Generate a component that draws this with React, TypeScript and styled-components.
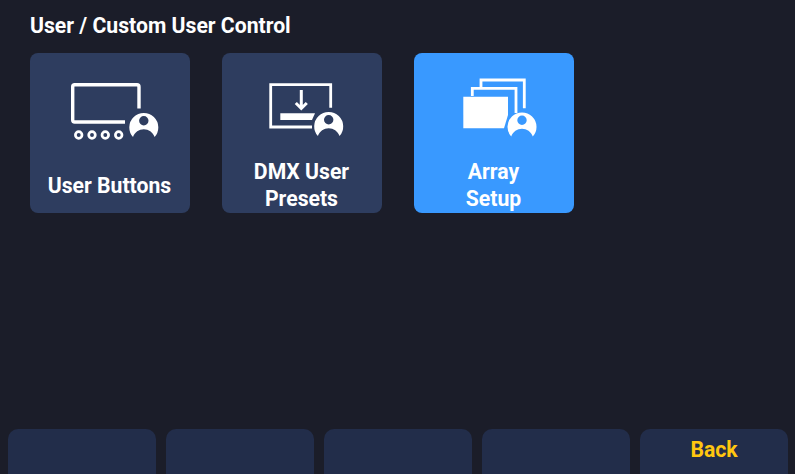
import React from 'react';
import styled, {createGlobalStyle} from 'styled-components';

const GlobalStyle = createGlobalStyle`
  html, body {
    margin: 0;
    padding: 0;
    height: 100%;
    background: #1b1d29;
    overflow: hidden;
  }
`;

const Person = ({x, y}: {x: number; y: number}): JSX.Element => (
    <path
        transform={`translate(${x} ${y})`}
        fill="#fff"
        fillRule="evenodd"
        d="M-10.8 9.6A14.5 14.5 0 1 1 10.8 9.6C9 4.6 4.8 1.8 0 1.8S-9 4.6-10.8 9.6ZM0-11.4a4.7 4.7 0 1 0 0 9.4a4.7 4.7 0 1 0 0-9.4Z"
    />
);

const ButtonsIcon = (): JSX.Element => (
    <IconSvg viewBox="0 0 100 66">
        <path d="M79 31.5V9.7a2 2 0 0 0-2-2H14.7a2 2 0 0 0-2 2V43a2 2 0 0 0 2 2H65" fill="none" stroke="#fff" strokeWidth="3.4"/>
        {[18.7, 32, 45.3, 58.7].map((cx) => (
            <circle key={cx} cx={cx} cy="58" r="3.3" fill="none" stroke="#fff" strokeWidth="2.7"/>
        ))}
        <Person x={83.8} y={50.5}/>
    </IconSvg>
);

const PresetsIcon = (): JSX.Element => (
    <IconSvg viewBox="0 0 100 66">
        <path d="M78.7 30.7V7.7H18.7V50H60" fill="none" stroke="#fff" strokeWidth="2.8"/>
        <path d="M28.3 36.3H63L60 43H28.3Z" fill="#fff"/>
        <path d="M49.3 13V31M43.8 26L49.3 31.5L54.8 26" fill="none" stroke="#fff" strokeWidth="3"/>
        <Person x={76.7} y={49.5}/>
    </IconSvg>
);

const ArrayIcon = (): JSX.Element => (
    <IconSvg viewBox="0 0 100 66">
        <path d="M37 10V3H80.3V31.3" fill="none" stroke="#fff" strokeWidth="2.8"/>
        <path d="M28.3 19V11.3H72V36" fill="none" stroke="#fff" strokeWidth="2.8"/>
        <path d="M19.3 19.7H64V38L60 51.3H19.3Z" fill="#fff"/>
        <Person x={78} y={50}/>
    </IconSvg>
);

const tiles = [
    {title: 'User Buttons', Icon: ButtonsIcon, active: false},
    {title: 'DMX User\nPresets', Icon: PresetsIcon, active: false},
    {title: 'Array\nSetup', Icon: ArrayIcon, active: true}
];

const softKeys = ['', '', '', '', 'Back'];

const App = (): JSX.Element => (
    <Screen>
        <GlobalStyle/>
        <Heading>User / Custom User Control</Heading>
        <TileRow>
            {tiles.map(({title, Icon, active}) => (
                <Tile key={title} $active={active}>
                    <Icon/>
                    <TileLabel>{title}</TileLabel>
                </Tile>
            ))}
        </TileRow>
        <SoftKeys>
            {softKeys.map((label, i) => (
                <SoftKey key={i}>{label}</SoftKey>
            ))}
        </SoftKeys>
    </Screen>
);

const Screen = styled.div`
  display: flex;
  flex-direction: column;
  height: 474px;
  width: 795px;
  overflow: hidden;
  background: #1b1d29;
  color: #fff;
  font-family: Roboto, "Liberation Sans", sans-serif;
  font-weight: 700;
  font-size: 21.2px;
`;

const Heading = styled.h1`
  margin: 0;
  padding: 13px 30px 14px;
  font-size: 21.2px;
  font-weight: 700;
  line-height: 26px;
`;

const TileRow = styled.div`
  display: flex;
  flex: 1;
  align-items: flex-start;
  gap: 32px;
  padding: 0 30px;
`;

const Tile = styled.div<{$active: boolean}>`
  display: flex;
  flex-direction: column;
  align-items: center;
  box-sizing: border-box;
  width: 160px;
  height: 160px;
  padding-top: 24px;
  border-radius: 8px;
  background: ${(props) => props.$active ? '#3999ff' : '#2e3d5f'};
`;

const IconSvg = styled.svg`
  display: block;
  flex: none;
  width: 100px;
  height: 66px;
`;

const TileLabel = styled.div`
  display: flex;
  flex: 1;
  align-items: center;
  justify-content: center;
  box-sizing: border-box;
  width: 140px;
  padding-top: 14px;
  padding-right: 1px;
  text-align: center;
  white-space: pre-line;
  line-height: 27px;
`;

const SoftKeys = styled.div`
  display: flex;
  flex: none;
  gap: 10px;
  height: 45px;
  padding: 0 7px 0 8px;
  overflow: hidden;
`;

const SoftKey = styled.div`
  flex: none;
  width: 148px;
  height: 60px;
  border-radius: 10px;
  background: #222d4a;
  color: #ffc60f;
  text-align: center;
  line-height: 42px;
`;

export default App;
